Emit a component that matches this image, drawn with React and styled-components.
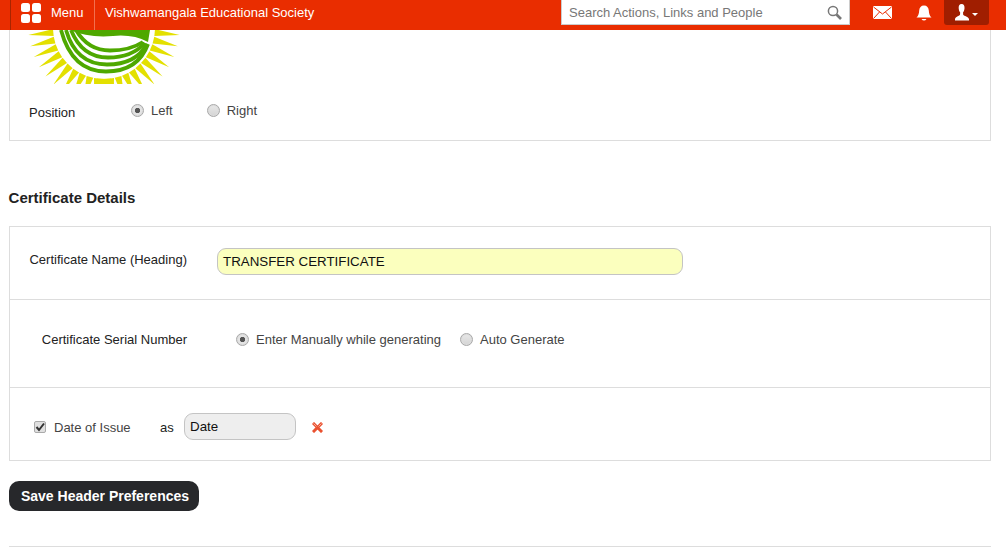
import React from "react";
import styled, { createGlobalStyle } from "styled-components";

const Global = createGlobalStyle`
  html, body { margin: 0; padding: 0; background: #fff; }
  body { font-family: "Liberation Sans", Arial, sans-serif; font-size: 13px; color: #222; overflow: hidden; }
`;
const Page = styled.div`width: 1006px; height: 554px; overflow: hidden; display: flex; flex-direction: column;`;
const Header = styled.header`
  height: 30px; flex: none; background: #e92d00; display: flex; align-items: flex-start; color: #fff;
`;
const MenuButton = styled.div`
  margin-left: 10px; width: 85px; height: 30px; box-sizing: border-box; display: flex; align-items: flex-start; gap: 10px;
  padding: 3px 0 0 10px; border-left: 1px solid #a82400; border-right: 1px solid #f2704f;
  font-size: 13px; line-height: 20px;
`;
const Brand = styled.div`margin-left: 10px; font-size: 13px; line-height: 26px; flex: 0 0 456px;`;
const Search = styled.div`
  width: 289px; height: 25px; box-sizing: border-box; background: #fff; border: 1px solid #ccc; border-top: 0;
  display: flex; align-items: center; justify-content: space-between; padding: 0 7px 0 7px;
  color: #777; font-size: 13px;
`;
const IconSlot = styled.div`
  display: flex; align-items: center; justify-content: center; height: 25px; width: ${p => p.$w}px; margin-left: ${p => p.$ml || 0}px;
`;
const UserButton = styled.div`
  margin-left: 12px; width: 45px; height: 25px; background: #a01e00; border-radius: 0 0 3px 3px;
  display: flex; align-items: center; justify-content: center; gap: 3px;
`;
const Caret = styled.span`
  width: 0; height: 0; border-left: 3px solid transparent; border-right: 3px solid transparent;
  border-top: 3px solid #fff; margin-top: 3px;
`;
const Content = styled.main`padding: 0 15px 0 9px; flex: 1;`;
const LogoPanel = styled.section`
  height: 111px; box-sizing: border-box; border: 1px solid #ddd; border-top: 0; padding-left: 18px;
`;
const Logo = styled.svg`display: block; width: 154px; height: 54px;`;
const PositionRow = styled.div`display: flex; margin-top: 17px; align-items: flex-start; margin-left: 1px;`;
const PositionLabel = styled.div`width: 102px; line-height: 18px; margin-top: 3px; color: #222;`;
const Choice = styled.label`
  display: inline-flex; align-items: center; gap: 7px; color: #444; font-size: 13px; line-height: 20px; margin-right: ${p => p.$mr}px;
`;
const Radio = styled.span`
  width: 13px; height: 13px; border-radius: 50%; box-sizing: border-box; border: 1px solid #a8a8a8; flex: none; margin-top: -1px;
  background: ${p => p.$on ? "radial-gradient(circle, #555 0 2.3px, #e4e4e4 3px)" : "linear-gradient(#e8e8e8,#d4d4d4)"};
  box-shadow: inset 0 0 0 1px #dcdcdc;
`;
const Title = styled.h2`
  margin: 47px 0 18px -0.4px; font-size: 15px; line-height: 20px; font-weight: bold; color: #222; 
`;
const Panel = styled.section`border: 1px solid #ddd;`;
const Row = styled.div`
  height: ${p => p.$h}px; box-sizing: border-box; display: flex; align-items: ${p => p.$top ? "flex-start" : "center"};
  border-top: ${p => p.$first ? 0 : "1px solid #ddd"}; padding: ${p => p.$pt || 0}px 0 ${p => p.$pb || 0}px 19px;
`;
const FieldLabel = styled.div`width: 158px; text-align: right; flex: none; margin-right: ${p => p.$mr}px; margin-top: ${p => p.$mt || 0}px; color: #222; line-height: 18px;`;
const TextField = styled.div`
  width: 466px; height: 27px; box-sizing: border-box; border: 1px solid #c4c4c4; border-radius: 9px; background: #fbffbe;
  margin-top: 21px; padding-left: 5px; line-height: 25px; font-size: 13.33px; color: #111;
`;
const Check = styled.span`
  width: 12px; height: 12px; border-radius: 2px; border: 1px solid #aaa; background: #e0e0e0; display: flex; align-items: center; justify-content: center;
  box-sizing: border-box; margin-left: 5px; flex: none;
`;
const DateLabel = styled.span`color: #444; margin-left: 8px; width: 106px;`;
const As = styled.span`color: #222; width: 24px;`;
const SelectBox = styled.div`
  width: 112px; height: 27px; box-sizing: border-box; border: 1px solid #c4c4c4; border-radius: 9px; background: #eee;
  padding-left: 5px; line-height: 25px; font-size: 13.33px; color: #111; margin: -2px 16px 0 0;
`;
const SaveButton = styled.button`
  display: block; margin: 20px 0 35px; width: 190px; height: 30px; border: 0; border-radius: 10px; background: #27282b; color: #fff;
  font: bold 14px "Liberation Sans", Arial, sans-serif; padding: 0 0 0 2px; 
`;
const Rule = styled.hr`margin: 0; border: 0; border-top: 1px solid #ddd;`;

const CX = 76, CY = -2;
const polar = (r, a, s) => `${CX + s * r * Math.cos(a)},${CY + r * Math.sin(a)}`;
const rays = [];
for (const side of [-1, 1]) {
  for (let k = -1; k < 11; k++) {
    const a = ((5.2 + 8.6 * k) * Math.PI) / 180;
    rays.push(`${polar(76, a, side)} ${polar(51, a - 0.068, side)} ${polar(51, a + 0.068, side)}`);
  }
}
rays.push(`${polar(76, Math.PI / 2 - 0.075, 1)} ${polar(51, Math.PI / 2 - 0.143, 1)} ${polar(51, Math.PI / 2 - 0.007, 1)}`);
rays.push(`${polar(76, Math.PI / 2 - 0.075, -1)} ${polar(51, Math.PI / 2 - 0.143, -1)} ${polar(51, Math.PI / 2 - 0.007, -1)}`);

const SunLogo = () => (
  <Logo viewBox="0 0 154 54">
    {rays.map((p, i) => <polygon key={i} points={p} fill="#e3e000" />)}
    <g fill="none" stroke="#4ea800" strokeWidth="3.8">
      <path d="M33 0 Q44 41.5 78 41.5 Q110 41.5 120 14" />
      <path d="M38 0 Q48 34.5 79 34.5 Q108 34.5 119 14" />
      <path d="M43 0 Q54 27.5 80 27.5 Q104 27.5 117 13" />
      <path d="M48 0 Q60 20.5 82 20.5 Q102 20.5 115 12" />
    </g>
    <path d="M42 0 Q60 8 85 6 Q105 4 120 12 L122 0 Z" fill="#4ea800" />
  </Logo>
);

const MenuIcon = () => (
  <svg width="20" height="20" viewBox="0 0 20 20" fill="#fff">
    <rect x="0" y="0" width="9" height="9" rx="2.5" />
    <rect x="11" y="0" width="9" height="9" rx="2.5" />
    <rect x="0" y="11" width="9" height="9" rx="2.5" />
    <rect x="11" y="11" width="9" height="9" rx="2.5" />
  </svg>
);
const SearchIcon = () => (
  <svg width="15" height="15" viewBox="0 0 15 15" fill="none" stroke="#777">
    <circle cx="6" cy="6" r="4.6" strokeWidth="1.5" />
    <path d="M9.5 9.5 L14 14" strokeWidth="2.6" />
  </svg>
);
const MailIcon = () => (
  <svg width="19" height="13" viewBox="0 0 19 13">
    <rect width="19" height="13" rx="1" fill="#fff" />
    <path d="M0.5 1 L9.5 8 L18.5 1 M0.5 12.5 L6.5 6 M18.5 12.5 L12.5 6" fill="none" stroke="#e92d00" strokeWidth="1" />
  </svg>
);
const BellIcon = () => (
  <svg width="16" height="16" viewBox="0 0 16 16" fill="#fff">
    <path d="M8 0.5 C11 0.5 12.6 2.6 12.8 5.5 C13 9 13.6 10.6 15.5 12.6 L0.5 12.6 C2.4 10.6 3 9 3.2 5.5 C3.4 2.6 5 0.5 8 0.5 Z" />
    <path d="M5.5 14 H10.5 Q9.5 15.6 8 15.6 Q6.5 15.6 5.5 14 Z" />
  </svg>
);
const UserIcon = () => (
  <svg width="14" height="17" viewBox="0 0 14 17" fill="#fff">
    <path d="M6.6 0 C8.8 0 9.8 2 9.5 4.4 C9.3 6.2 8.7 7.6 8 8.6 L8.2 10.8 C9.2 12.2 13.4 12.8 14 15 L14 16.6 L0 16.6 L0 15 C0.6 12.8 4 12.2 5 10.8 L5.2 8.6 C4.5 7.6 3.9 6.2 3.7 4.4 C3.4 2 4.4 0 6.6 0 Z" />
  </svg>
);
const CheckMark = () => (
  <svg width="10" height="10" viewBox="0 0 10 10"><path d="M1.5 5 L4 8 L9 1.5" fill="none" stroke="#333" strokeWidth="2" /></svg>
);
const RemoveIcon = () => (
  <svg width="11" height="11" viewBox="0 0 11 11">
    <path d="M2 2 L9 9 M9 2 L2 9" stroke="#ea5130" strokeWidth="3" strokeLinecap="square" />
    <path d="M1.5 1.5 L4.5 4.5 M9.5 1.5 L6.5 4.5" stroke="#f7ac9a" strokeWidth="1" />
  </svg>
);

export default function App() {
  return (
    <Page>
      <Global />
      <Header>
        <MenuButton><MenuIcon /><span>Menu</span></MenuButton>
        <Brand>Vishwamangala Educational Society</Brand>
        <Search>Search Actions, Links and People<SearchIcon /></Search>
        <IconSlot $w={19} $ml={23}><MailIcon /></IconSlot>
        <IconSlot $w={16} $ml={24}><BellIcon /></IconSlot>
        <UserButton><UserIcon /><Caret /></UserButton>
      </Header>
      <Content>
        <LogoPanel>
          <SunLogo />
          <PositionRow>
            <PositionLabel>Position</PositionLabel>
            <Choice $mr={34}><Radio $on />Left</Choice>
            <Choice $mr={0}><Radio />Right</Choice>
          </PositionRow>
        </LogoPanel>
        <Title>Certificate Details</Title>
        <Panel>
          <Row $h={72} $first $top>
            <FieldLabel $mr={30} $mt={24}>Certificate Name (Heading)</FieldLabel>
            <TextField>TRANSFER CERTIFICATE</TextField>
          </Row>
          <Row $h={88} $pb={8}>
            <FieldLabel $mr={49}>Certificate Serial Number</FieldLabel>
            <Choice $mr={19}><Radio $on />Enter Manually while generating</Choice>
            <Choice $mr={0}><Radio />Auto Generate</Choice>
          </Row>
          <Row $h={73} $pt={6}>
            <Check><CheckMark /></Check>
            <DateLabel>Date of Issue</DateLabel>
            <As>as</As>
            <SelectBox>Date</SelectBox>
            <RemoveIcon />
          </Row>
        </Panel>
        <SaveButton>Save Header Preferences</SaveButton>
        <Rule />
      </Content>
    </Page>
  );
}
